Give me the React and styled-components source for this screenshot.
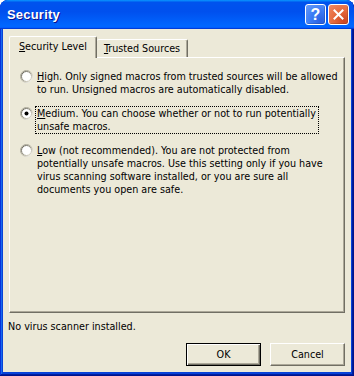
import styled, { createGlobalStyle } from "styled-components"

const Global = createGlobalStyle`
    html, body {
        margin: 0;
        padding: 0;
        background: #ffffff;
    }
    body {
        font-family: "DejaVu Sans Condensed", "Liberation Sans", sans-serif;
        font-size: 10.7px;
    }
`

const Window = styled.div`
    width: 354px;
    height: 376px;
    display: flex;
    flex-direction: column;
    box-sizing: border-box;
    background: #0842d8;
    border-radius: 8px 8px 0 0;
    box-shadow: inset -1px -1px #00138c, inset 1px 1px #0831d9,
        inset -2px -2px #001ea0, inset 2px 2px #166aee;
    overflow: hidden;
`

const TitleBar = styled.div`
    height: 29px;
    flex: none;
    display: flex;
    align-items: center;
    padding: 0 5px 0 7px;
    background: linear-gradient(
        180deg,
        #0997ff,
        #0053ee 8%,
        #0050ee 40%,
        #0066ff 88%,
        #0066ff 93%,
        #005bff 95%,
        #003dd7 96%,
        #003dd7
    );
    border-radius: 7px 7px 0 0;
`

const Title = styled.div`
    flex: 1;
    color: #ffffff;
    font-family: "Liberation Sans", sans-serif;
    font-weight: bold;
    font-size: 13px;
    letter-spacing: 0.2px;
    text-shadow: 1px 1px #0f1089;
`

const Controls = styled.div`
    display: flex;
    gap: 2px;
`

const ControlButton = styled.div`
    width: 21px;
    height: 21px;
    box-sizing: border-box;
    border: 1px solid #ffffff;
    border-radius: 3px;
    display: flex;
    align-items: center;
    justify-content: center;
    color: #ffffff;
    font-family: "Liberation Sans", sans-serif;
    font-weight: bold;
    font-size: 16px;
    background: ${(p) =>
        p.$close
            ? "radial-gradient(circle at 80% 85%, #cc4622 0%, #e5673a 45%, #f08a64 100%)"
            : "radial-gradient(circle at 80% 85%, #2a5fe0 0%, #3c7cf5 50%, #6a9cf8 100%)"};
    box-shadow: inset -1px -1px rgba(0, 0, 0, 0.15);
`

const Body = styled.div`
    flex: 1;
    margin: 0 3px 4px 3px;
    background: #ece9d8;
    padding: 7px 6px 6px 6px;
    display: flex;
    flex-direction: column;
    color: #000000;
`

const TabStrip = styled.div`
    display: flex;
    align-items: flex-end;
    height: 21px;
    position: relative;
    z-index: 1;
`

const Tab = styled.div`
    box-sizing: border-box;
    background: #ece9d8;
    border-top: 1px solid #ffffff;
    border-left: 1px solid #ffffff;
    border-right: 1px solid #716f64;
    box-shadow: inset -1px 0 #aca899;
    border-radius: 2px 2px 0 0;
    display: flex;
    align-items: center;
    justify-content: center;
    white-space: nowrap;
    height: ${(p) => (p.$active ? "22px" : "18px")};
    margin-bottom: ${(p) => (p.$active ? "-1px" : "0")};
    padding: ${(p) => (p.$active ? "0 9px 3px 9px" : "0 7px 0 7px")};
    ${(p) => (p.$active ? "" : "border-left: none;")}
`

const Key = styled.span`
    text-decoration: underline;
    text-underline-offset: 1px;
`

const Panel = styled.div`
    height: 256px;
    box-sizing: border-box;
    border-top: 1px solid #ffffff;
    border-left: 1px solid #ffffff;
    border-right: 1px solid #716f64;
    border-bottom: 1px solid #716f64;
    box-shadow: inset -1px -1px #aca899;
    padding: 12px 10px;
    display: flex;
    flex-direction: column;
    gap: 11px;
`

const Option = styled.div`
    display: flex;
    align-items: flex-start;
    gap: 3px;
`

const RadioBox = styled.div`
    width: 13px;
    height: 13px;
    flex: none;
`

const OptionText = styled.div`
    line-height: 13px;
    white-space: nowrap;
    padding: 0 2px 0 1px;
    outline: ${(p) => (p.$focus ? "1px dotted #000000" : "none")};
    outline-offset: 0;
`

const Status = styled.div`
    margin-top: 7px;
    margin-left: -1px;
    line-height: 13px;
`

const ButtonRow = styled.div`
    margin-top: auto;
    display: flex;
    justify-content: flex-end;
    gap: 9px;
`

const Button = styled.button`
    width: 75px;
    height: 23px;
    box-sizing: border-box;
    font: inherit;
    color: #000000;
    background: #ece9d8;
    border: 1px solid;
    border-top-color: ${(p) => (p.$default ? "#000000" : "#ffffff")};
    border-left-color: ${(p) => (p.$default ? "#000000" : "#ffffff")};
    border-right-color: ${(p) => (p.$default ? "#000000" : "#716f64")};
    border-bottom-color: ${(p) => (p.$default ? "#000000" : "#716f64")};
    box-shadow: ${(p) =>
        p.$default
            ? "inset 1px 1px #ffffff, inset -1px -1px #716f64, inset -2px -2px #aca899"
            : "inset -1px -1px #aca899"};
    padding: 0;
`

const Radio = ({ checked }) => (
    <RadioBox>
        <svg width="13" height="13" viewBox="0 0 13 13">
            <defs>
                <linearGradient id="ro" x1="0" y1="0" x2="1" y2="1">
                    <stop offset="0" stopColor="#9d9a8c" />
                    <stop offset="0.5" stopColor="#b8b5a6" />
                    <stop offset="1" stopColor="#ffffff" />
                </linearGradient>
                <linearGradient id="ri" x1="0" y1="0" x2="1" y2="1">
                    <stop offset="0" stopColor="#55534a" />
                    <stop offset="0.55" stopColor="#a19e90" />
                    <stop offset="1" stopColor="#ece9d8" />
                </linearGradient>
            </defs>
            <circle cx="6.5" cy="6.5" r="6" fill="none" stroke="url(#ro)" strokeWidth="1" />
            <circle cx="6.5" cy="6.5" r="5" fill="#ffffff" stroke="url(#ri)" strokeWidth="1" />
            {checked && <circle cx="6.5" cy="6.5" r="2" fill="#000000" />}
        </svg>
    </RadioBox>
)

const App = () => {
    return (
        <>
            <Global />
            <Window>
                <TitleBar>
                    <Title>Security</Title>
                    <Controls>
                        <ControlButton>?</ControlButton>
                        <ControlButton $close>
                            <svg width="11" height="11" viewBox="0 0 11 11">
                                <path
                                    d="M1.5 1.5 L9.5 9.5 M9.5 1.5 L1.5 9.5"
                                    stroke="#ffffff"
                                    strokeWidth="2"
                                    strokeLinecap="square"
                                />
                            </svg>
                        </ControlButton>
                    </Controls>
                </TitleBar>
                <Body>
                    <TabStrip>
                        <Tab $active>
                            <span>
                                <Key>S</Key>ecurity Level
                            </span>
                        </Tab>
                        <Tab>
                            <span>
                                <Key>T</Key>rusted Sources
                            </span>
                        </Tab>
                    </TabStrip>
                    <Panel>
                        <Option>
                            <Radio />
                            <OptionText>
                                <Key>H</Key>igh. Only signed macros from trusted
                                sources will be allowed
                                <br />
                                to run. Unsigned macros are automatically
                                disabled.
                            </OptionText>
                        </Option>
                        <Option>
                            <Radio checked />
                            <OptionText $focus>
                                <Key>M</Key>edium. You can choose whether or not
                                to run potentially
                                <br />
                                unsafe macros.
                            </OptionText>
                        </Option>
                        <Option>
                            <Radio />
                            <OptionText>
                                <Key>L</Key>ow (not recommended). You are not
                                protected from
                                <br />
                                potentially unsafe macros. Use this setting only
                                if you have
                                <br />
                                virus scanning software installed, or you are
                                sure all
                                <br />
                                documents you open are safe.
                            </OptionText>
                        </Option>
                    </Panel>
                    <Status>No virus scanner installed.</Status>
                    <ButtonRow>
                        <Button $default>OK</Button>
                        <Button>Cancel</Button>
                    </ButtonRow>
                </Body>
            </Window>
        </>
    )
}

export default App
